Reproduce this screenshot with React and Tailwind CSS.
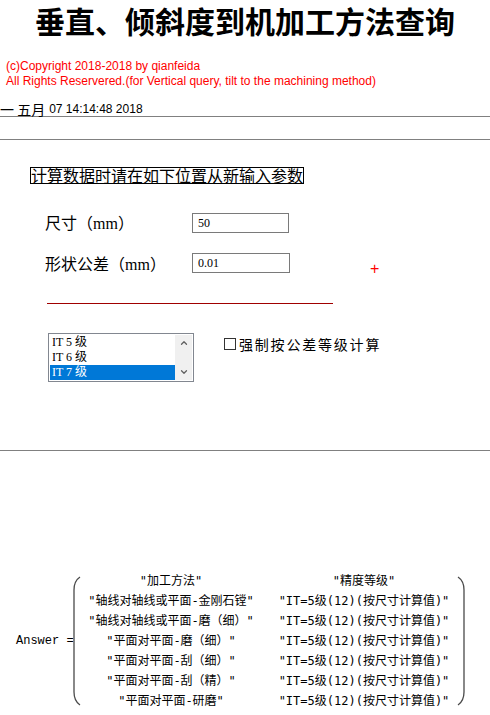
import { ChevronUp, ChevronDown } from 'lucide-react';

const rows = [
  ['"加工方法"', '"精度等级"'],
  ['"轴线对轴线或平面-金刚石镗"', '"IT=5级(12)(按尺寸计算值)"'],
  ['"轴线对轴线或平面-磨（细）"', '"IT=5级(12)(按尺寸计算值)"'],
  ['"平面对平面-磨（细）"', '"IT=5级(12)(按尺寸计算值)"'],
  ['"平面对平面-刮（细）"', '"IT=5级(12)(按尺寸计算值)"'],
  ['"平面对平面-刮（精）"', '"IT=5级(12)(按尺寸计算值)"'],
  ['"平面对平面-研磨"', '"IT=5级(12)(按尺寸计算值)"'],
];

function Paren({ right }) {
  return (
    <svg width="8" height="130" viewBox="0 0 8 130" className="shrink-0">
      <path
        d={right ? 'M1 1 Q7 5 7 14 L7 116 Q7 125 1 129' : 'M7 1 Q1 5 1 14 L1 116 Q1 125 7 129'}
        fill="none"
        stroke="#4a4a4a"
        strokeWidth="1.3"
      />
    </svg>
  );
}

export default function App() {
  return (
    <div className="w-[490px] h-[715px] bg-white text-black overflow-hidden font-['Noto_Sans_CJK_SC',sans-serif]">
      <div className="h-[40px] text-center text-[30px] leading-[40px] font-bold">
        垂直、倾斜度到机加工方法查询
      </div>

      <div className="mt-[19px] px-[6px] text-[12px] leading-[15px] text-[#ff0000] font-['Liberation_Sans','Noto_Sans_CJK_SC',sans-serif]">
        <div>(c)Copyright 2018-2018 by qianfeida</div>
        <div>All Rights Reservered.(for Vertical query, tilt to the machining method)</div>
      </div>

      <div className="mt-[13px] flex items-end h-[14px] text-[12px] leading-[14px] font-['Liberation_Sans','Noto_Sans_CJK_SC',sans-serif]">
        <span className="text-[14px] font-['Noto_Sans_CJK_SC',sans-serif]">一 五月</span>
        <span className="ml-[4px]">07 14:14:48 2018</span>
      </div>
      <div className="h-px bg-[#808080]" />
      <div className="mt-[22px] h-px bg-[#808080]" />

      <div className="mt-[27px] ml-[30px] inline-block h-[17px] border border-black text-[16px] leading-[15px]">
        计算数据时请在如下位置从新输入参数
      </div>

      <div className="mt-[26px] flex items-center h-[20px]">
        <span className="ml-[45px] w-[147px] text-[16px]">
          尺寸（<span className="font-['Liberation_Serif',serif]">mm</span>）
        </span>
        <div className="w-[97px] h-[20px] border border-[#7a7a7a] pl-[5px] text-[12px] leading-[18px] font-['Liberation_Serif',serif]">50</div>
      </div>

      <div className="mt-[20px] flex items-start h-[20px]">
        <span className="ml-[45px] w-[147px] text-[16px] leading-[20px]">
          形状公差（<span className="font-['Liberation_Serif',serif]">mm</span>）
        </span>
        <div className="w-[98px] h-[20px] border border-[#7a7a7a] pl-[5px] text-[12px] leading-[18px] font-['Liberation_Serif',serif]">0.01</div>
        <span className="ml-[80px] mt-[6px] text-[16px] leading-[20px] text-[#ff0000] font-['Liberation_Sans',sans-serif]">+</span>
      </div>

      <div className="mt-[30px] ml-[47px] w-[286px] h-px bg-[#a00000]" />

      <div className="mt-[29px] flex items-start">
        <div className="ml-[48px] w-[146px] h-[49px] border border-[#828790] flex p-px">
          <div className="flex-1 text-[12px] leading-[15px] font-['Liberation_Serif','Noto_Sans_CJK_SC',serif]">
            <div className="pl-[2px] h-[15px] overflow-hidden">IT 5 级</div>
            <div className="pl-[2px] h-[15px] overflow-hidden">IT 6 级</div>
            <div className="pl-[2px] h-[15px] overflow-hidden bg-[#0078d7] text-white">IT 7 级</div>
          </div>
          <div className="w-[17px] bg-[#f0f0f0] flex flex-col justify-between items-center py-[3px]">
            <ChevronUp size={10} strokeWidth={3} color="#606060" />
            <ChevronDown size={10} strokeWidth={3} color="#606060" />
          </div>
        </div>
        <div className="ml-[30px] mt-[3px] flex items-center">
          <div className="w-[12px] h-[12px] border border-[#333]" />
          <span className="ml-[3px] text-[14px] leading-[16px] tracking-[1.8px]">强制按公差等级计算</span>
        </div>
      </div>

      <div className="mt-[68px] h-px bg-[#808080]" />

      <div className="mt-[120px] flex items-center">
        <span className="ml-[16px] w-[57px] shrink-0 whitespace-nowrap text-[12px] font-['Liberation_Mono',monospace]">Answer =</span>
        <Paren />
        <div className="grid grid-cols-[180px_186px] gap-x-[10px] text-[12px] leading-[20px] font-['DejaVu_Sans_Mono','Noto_Sans_CJK_SC',monospace]">
          {rows.map(([a, b], i) => (
            <div key={i} className="contents">
              <div className="text-center whitespace-nowrap">{a}</div>
              <div className="text-center whitespace-nowrap">{b}</div>
            </div>
          ))}
        </div>
        <Paren right />
      </div>
    </div>
  );
}
